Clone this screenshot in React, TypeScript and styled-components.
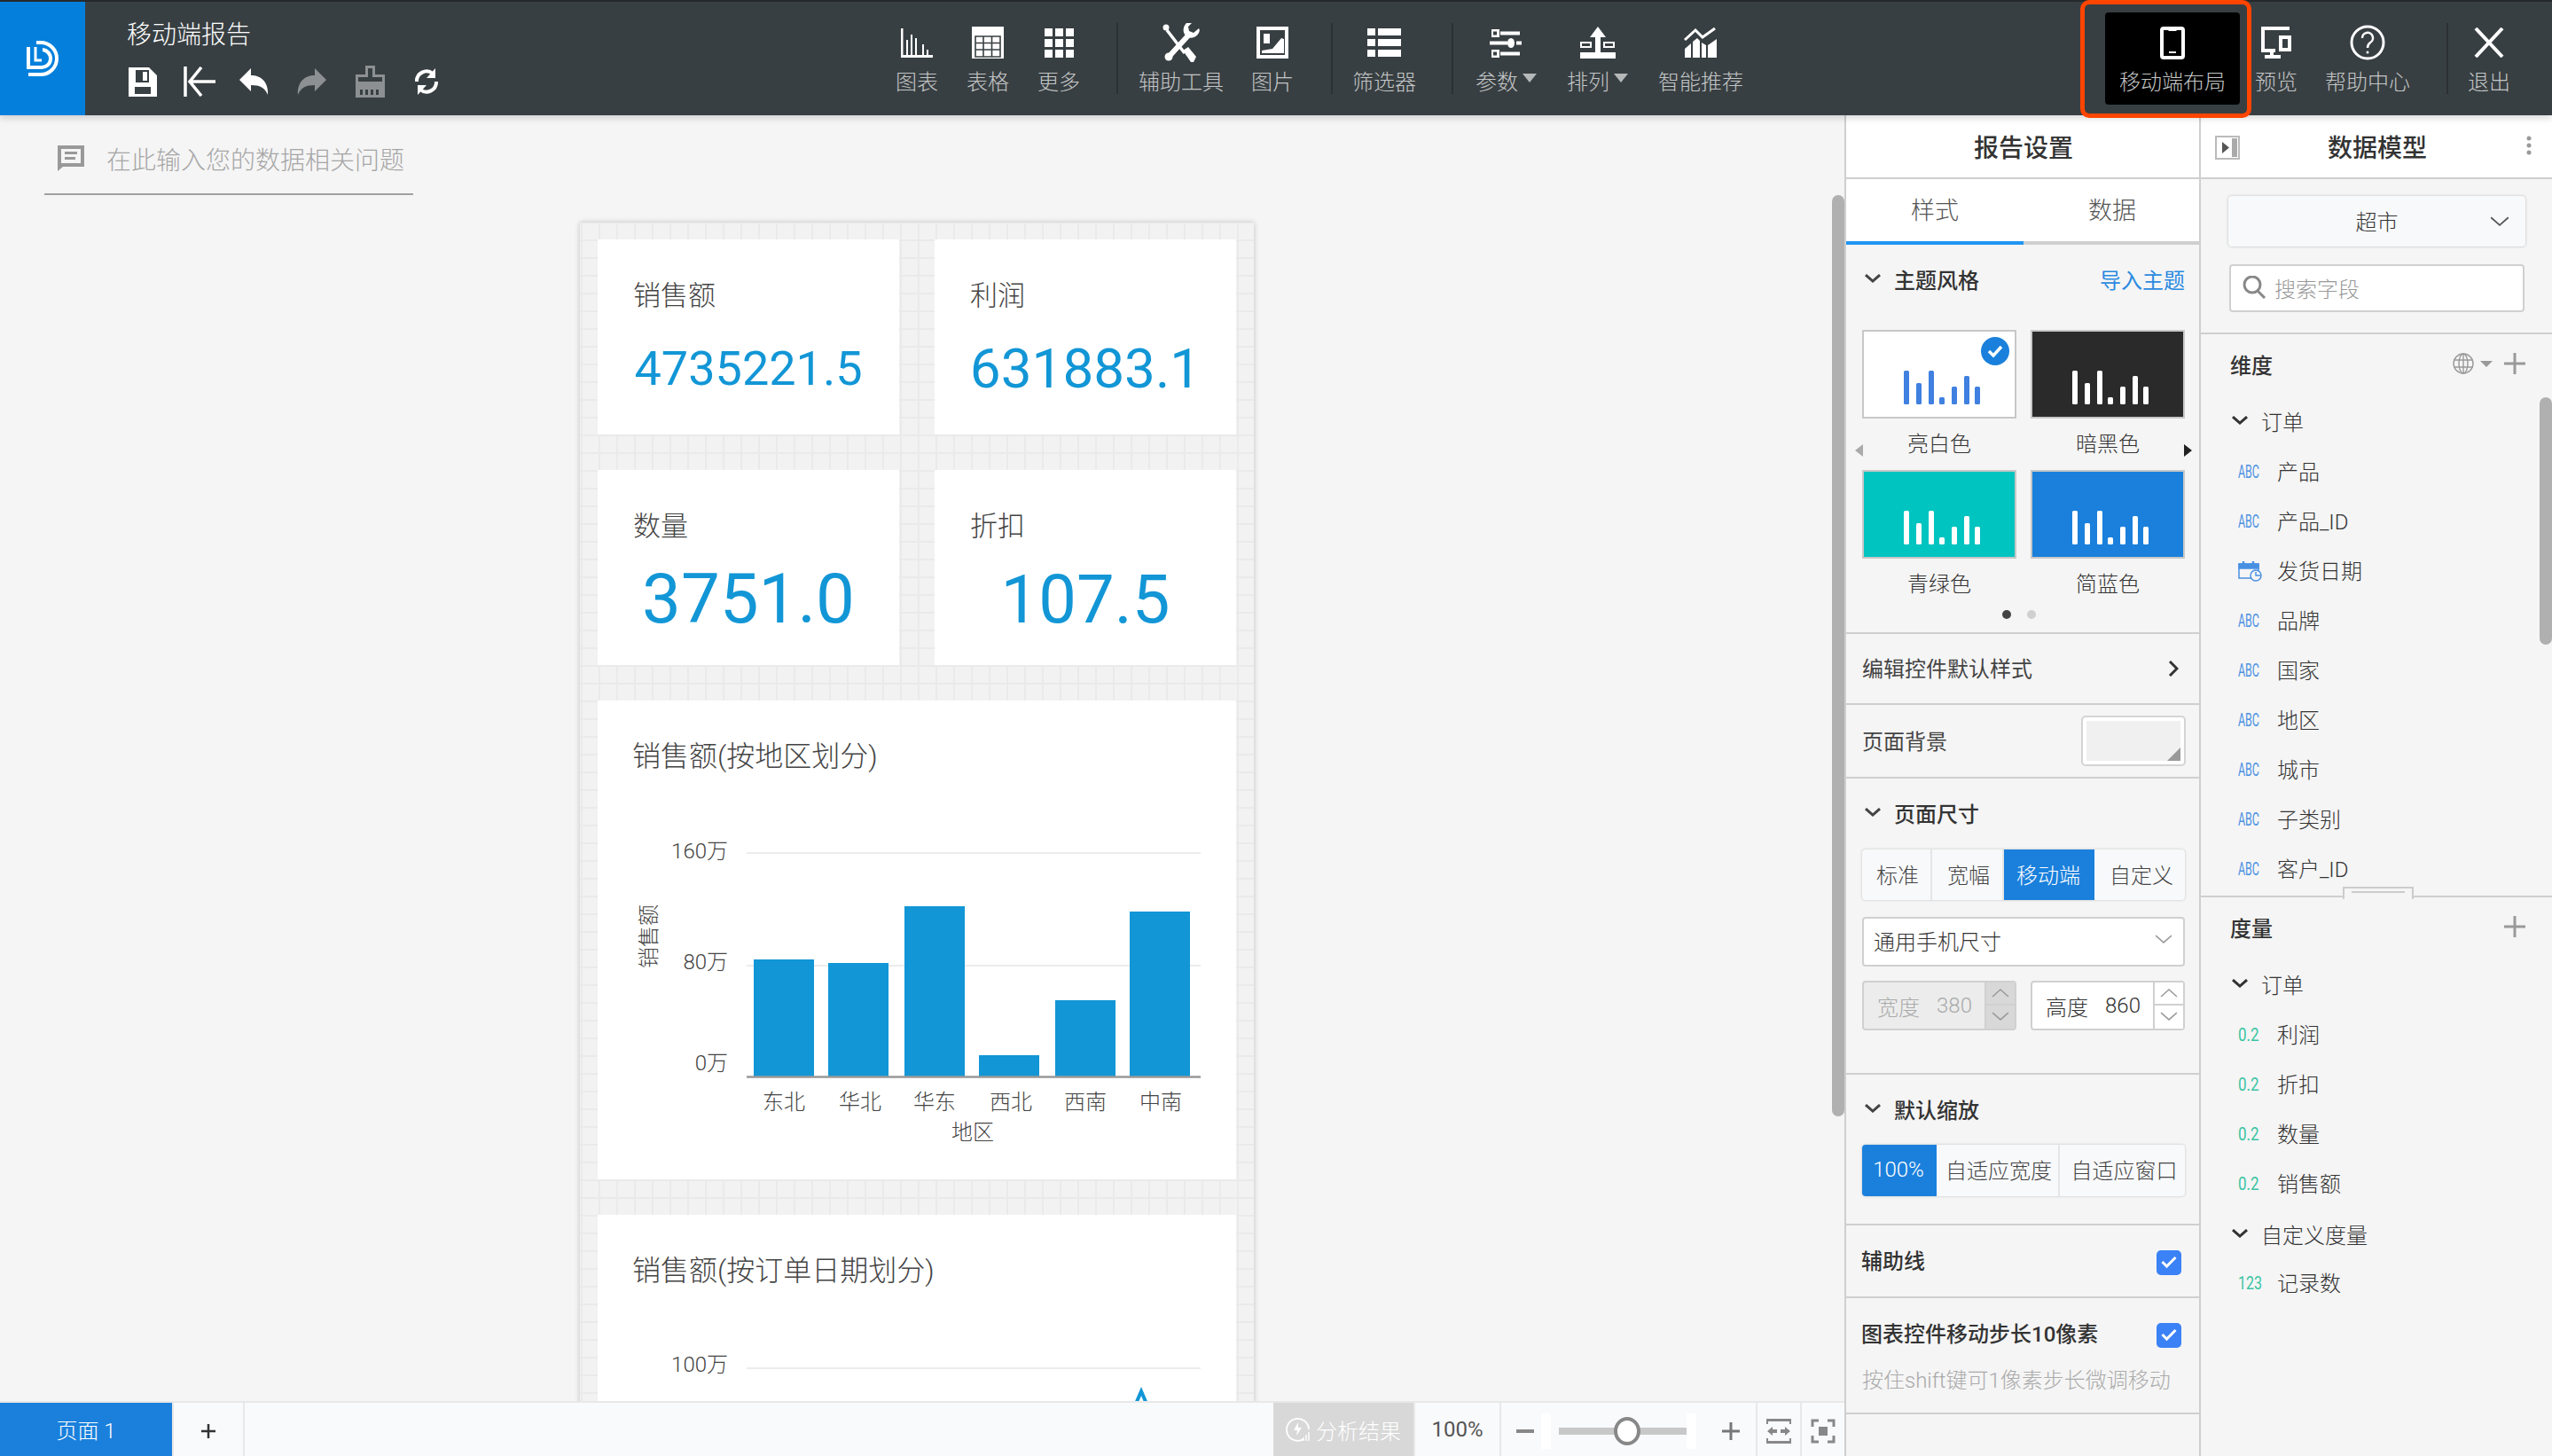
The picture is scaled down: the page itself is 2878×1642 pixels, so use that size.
import React from "react";
import styled, { createGlobalStyle } from "styled-components";

const FONT = `Roboto, "Noto Sans CJK SC", sans-serif`;
const BLUE = "#1a80dc";
const CHART = "#1296d6";
const LINE = "#cfcfcf";

const Global = createGlobalStyle`
  html, body { margin: 0; padding: 0; width: 2878px; height: 1642px; overflow: hidden; background: #f5f5f5; }
  * { box-sizing: border-box; }
  body { font-family: ${FONT}; color: #333; }
  svg { display: block; }
`;

const Shell = styled.div`
  width: 2878px;
  height: 1642px;
  display: flex;
  flex-direction: column;
  overflow: hidden;
`;

/* ---------- top bar ---------- */
const TopBar = styled.header`
  height: 130px;
  flex: none;
  display: flex;
  background: #383f42;
  border-top: 2px solid #25292b;
  box-shadow: 0 3px 8px rgba(0, 0, 0, 0.16);
  position: relative;
  z-index: 3;
`;
const Logo = styled.div`
  width: 96px;
  flex: none;
  background: #0480dc;
  display: flex;
  align-items: center;
  justify-content: center;
`;
const TitleBlock = styled.div`
  width: 898px;
  flex: none;
  padding-left: 47px;
`;
const ReportTitle = styled.div`
  margin-top: 24px;
  font-size: 28px;
  line-height: 28px;
  color: #fff;
  font-weight: 300;
`;
const QuickRow = styled.div`
  display: flex;
  align-items: center;
  height: 36px;
  margin: 20px 0 0 -14px;
`;
const QuickBtn = styled.div<{ $pr?: number }>`
  width: 64px;
  padding-right: ${(p) => p.$pr ?? 0}px;
  display: flex;
  justify-content: center;
`;
const ToolItem = styled.div<{ $w: number; $ml?: number }>`
  width: ${(p) => p.$w}px;
  margin-left: ${(p) => p.$ml ?? 0}px;
  flex: none;
  display: flex;
  flex-direction: column;
  align-items: center;
`;
const IconSlot = styled.div`
  height: 44px;
  margin-top: 24px;
  display: flex;
  align-items: center;
  justify-content: center;
`;
const ToolLabel = styled.div`
  margin-top: 9px;
  font-size: 24px;
  line-height: 28px;
  color: #c4c6c7;
  font-weight: 300;
  display: flex;
  align-items: flex-start;
  white-space: nowrap;
`;
const Caret = styled.span`
  display: inline-block;
  width: 0;
  height: 0;
  margin: 4px 0 0 5px;
  border-left: 8px solid transparent;
  border-right: 8px solid transparent;
  border-top: 10px solid #b5b8b9;
`;
const ToolSep = styled.div<{ $ml: number; $mr: number }>`
  width: 2px;
  height: 80px;
  margin: 24px ${(p) => p.$mr}px 0 ${(p) => p.$ml}px;
  background: #2b3032;
  flex: none;
`;
const RightTools = styled.div`
  margin-left: auto;
  margin-right: 31px;
  display: flex;
`;
const ActiveItem = styled.div`
  width: 152px;
  height: 104px;
  margin-top: 12px;
  background: #000;
  border-radius: 4px;
  display: flex;
  flex-direction: column;
  align-items: center;
  position: relative;
  ${IconSlot} { margin-top: 12px; }
`;
const Highlight = styled.div`
  position: absolute;
  left: -28px;
  right: -13px;
  top: -14px;
  bottom: -15px;
  border: 5px solid #ff4500;
  border-radius: 10px;
  pointer-events: none;
`;

/* ---------- body ---------- */
const Body = styled.div`
  flex: 1;
  display: flex;
  min-height: 0;
`;
const Workspace = styled.main`
  width: 2080px;
  flex: none;
  display: flex;
  flex-direction: column;
  position: relative;
`;
const QuestionBar = styled.div`
  margin-left: 50px;
  width: 416px;
  height: 90px;
  flex: none;
  border-bottom: 2px solid #a0a0a0;
  display: flex;
  align-items: center;
  padding: 9px 0 0 15px;
  gap: 25px;
  font-size: 28px;
  color: #a6a6a6;
  font-weight: 300;
  white-space: nowrap;
`;
const CanvasScroll = styled.div`
  flex: 1;
  min-height: 0;
  overflow: hidden;
  padding: 31px 0 0 654px;
`;
const ScrollThumb = styled.div<{ $top: number; $h: number }>`
  position: absolute;
  right: 0;
  top: ${(p) => p.$top}px;
  width: 14px;
  height: ${(p) => p.$h}px;
  border-radius: 7px;
  background: #b0b0b0;
`;
const PageSheet = styled.div`
  width: 760px;
  padding: 19px 20px 40px;
  display: grid;
  grid-template-columns: 340px 340px;
  gap: 40px;
  background-color: #f2f2f2;
  background-image: linear-gradient(#eaeaea 2px, transparent 2px), linear-gradient(90deg, #eaeaea 2px, transparent 2px);
  background-size: 20px 20px;
  background-position: 1px 19px;
  box-shadow: 0 0 6px rgba(0, 0, 0, 0.22);
`;
const KpiCard = styled.section`
  height: 220px;
  background: #fff;
  padding-top: 44px;
`;
const KpiLabel = styled.div`
  padding-left: 40px;
  font-size: 31px;
  line-height: 40px;
  color: #444;
  font-weight: 300;
`;
const KpiValue = styled.div<{ $size: number }>`
  margin-top: 22px;
  height: 80px;
  line-height: 80px;
  text-align: center;
  font-size: ${(p) => p.$size}px;
  color: ${CHART};
`;
const ChartCard = styled.section<{ $h: number }>`
  grid-column: 1 / 3;
  height: ${(p) => p.$h}px;
  background: #fff;
  padding-top: 41px;
`;
const ChartTitle = styled.div`
  padding: 2px 0 0 39px;
  height: 40px;
  font-size: 32px;
  line-height: 40px;
  color: #444;
  font-weight: 300;
`;
const ChartText = styled.text`
  font-family: ${FONT};
  font-size: 24px;
  fill: #444;
  font-weight: 300;
`;

/* ---------- bottom bar ---------- */
const BottomBar = styled.footer`
  height: 62px;
  flex: none;
  display: flex;
  background: #f9fafc;
  border-top: 2px solid #e8e8e8;
  position: relative;
  z-index: 1;
`;
const PageTab = styled.div`
  width: 194px;
  padding-bottom: 2px;
  background: ${BLUE};
  color: #fff;
  font-size: 24px;
  display: flex;
  align-items: center;
  justify-content: center;
  font-weight: 300;
`;
const BarCell = styled.div<{ $w?: number; $pt?: number }>`
  width: ${(p) => (p.$w ? `${p.$w}px` : "auto")};
  padding-top: ${(p) => p.$pt ?? 0}px;
  flex: none;
  border-left: 2px solid #e8e8e8;
  display: flex;
  align-items: center;
  justify-content: center;
  font-size: 24px;
  color: #555;
`;
const Spacer = styled.div`
  flex: 1;
  border-left: 2px solid #e8e8e8;
`;
const AnalyseBtn = styled.div`
  width: 158px;
  flex: none;
  background: #d8d8d8;
  color: #fff;
  font-size: 24px;
  display: flex;
  align-items: center;
  justify-content: center;
  gap: 6px;
  font-weight: 300;
`;
const SliderWrap = styled.div`
  width: 289px;
  flex: none;
  padding-top: 4px;
  border-left: 2px solid #e8e8e8;
  display: flex;
  align-items: center;
`;
const SliderStop = styled.div`
  width: 11px;
  height: 40px;
  background: #fff;
`;
const SliderTrack = styled.div`
  width: 144px;
  height: 8px;
  background: #c8c8c8;
  margin-left: 9px;
  position: relative;
`;
const SliderThumb = styled.div`
  position: absolute;
  left: 62px;
  top: -12px;
  width: 30px;
  height: 32px;
  border-radius: 50%;
  border: 4px solid #888;
  background: #fff;
`;
const SliderBtn = styled.div<{ $w: number; $pl?: number }>`
  width: ${(p) => p.$w}px;
  padding-left: ${(p) => p.$pl ?? 0}px;
  display: flex;
  justify-content: center;
`;

/* ---------- settings panel ---------- */
const SettingsPanel = styled.aside`
  width: 400px;
  flex: none;
  background: #f5f5f5;
  border-left: 2px solid ${LINE};
  display: flex;
  flex-direction: column;
`;
const PanelHead = styled.div`
  height: 72px;
  flex: none;
  padding-left: 2px;
  background: #fff;
  border-bottom: 2px solid ${LINE};
  display: flex;
  align-items: center;
  justify-content: center;
  font-size: 28px;
  font-weight: 500;
  color: #333;
  position: relative;
`;
const Tabs = styled.div`
  height: 74px;
  flex: none;
  background: #fff;
  border-bottom: 4px solid ${LINE};
  display: flex;
`;
const Tab = styled.div<{ $on?: boolean }>`
  width: 200px;
  flex: none;
  margin-bottom: -4px;
  border-bottom: 4px solid ${(p) => (p.$on ? "#2196f3" : "transparent")};
  display: flex;
  align-items: center;
  justify-content: center;
  font-size: 27px;
  color: #555;
  font-weight: 300;
  padding-bottom: 3px;
  &:last-child { width: 198px; padding-left: 2px; }
`;
const Section = styled.div`
  border-bottom: 2px solid ${LINE};
  position: relative;
`;
const SectionHead = styled.div`
  height: 48px;
  margin-top: 14px;
  padding: 0 16px 0 21px;
  display: flex;
  align-items: center;
  gap: 15px;
  font-size: 24px;
  font-weight: 500;
  color: #333;
`;
const LinkText = styled.span`
  margin-left: auto;
  color: #2a8ae0;
  font-weight: 400;
`;
const ThemeGrid = styled.div`
  margin-top: 34px;
  padding-left: 18px;
  display: grid;
  grid-template-columns: 174px 174px;
  column-gap: 16px;
  row-gap: 2px;
`;
const ThemeCard = styled.div<{ $bg: string }>`
  height: 100px;
  border: 2px solid #c8c8c8;
  background: ${(p) => p.$bg};
  display: flex;
  align-items: flex-end;
  justify-content: center;
  padding: 0 0 14px 6px;
  position: relative;
`;
const ThemeBadge = styled.div`
  position: absolute;
  top: 6px;
  right: 6px;
  width: 32px;
  height: 32px;
`;
const ThemeLabel = styled.div`
  height: 56px;
  padding-bottom: 4px;
  display: flex;
  align-items: center;
  justify-content: center;
  font-size: 24px;
  color: #333;
  font-weight: 300;
`;
const Pager = styled.div`
  height: 10px;
  margin: 2px 0 15px;
  display: flex;
  justify-content: center;
  gap: 18px;
  padding-right: 8px;
`;
const PagerDot = styled.span<{ $on?: boolean }>`
  width: 10px;
  height: 10px;
  border-radius: 50%;
  background: ${(p) => (p.$on ? "#444" : "#d0d0d0")};
`;
const SlideArrow = styled.span<{ $side: "left" | "right" }>`
  position: absolute;
  top: 225px;
  ${(p) => (p.$side === "left" ? "left: 10px;" : "right: 8px;")}
  width: 0;
  height: 0;
  border-top: 7px solid transparent;
  border-bottom: 7px solid transparent;
  ${(p) => (p.$side === "left" ? "border-right: 9px solid #aaa;" : "border-left: 9px solid #222;")}
`;
const PlainRow = styled.div<{ $h: number }>`
  height: ${(p) => p.$h}px;
  padding: 0 20px 3px 18px;
  display: flex;
  align-items: center;
  justify-content: space-between;
  font-size: 24px;
  color: #444;
  font-weight: 400;
`;
const ChevronSlot = styled.span`
  margin: 3px 3px 0 0;
`;
const ColorBox = styled.div`
  width: 116px;
  height: 55px;
  margin: 3px -4px 0 0;
  background: #f0f0f0;
  border: 5px solid #fff;
  outline: 2px solid #d4d4d4;
  outline-offset: -1px;
  border-radius: 4px;
  position: relative;
  &::after {
    content: "";
    position: absolute;
    right: 0;
    bottom: 0;
    border-left: 15px solid transparent;
    border-bottom: 15px solid #999;
  }
`;
const SegGroup = styled.div<{ $mt: number; $h: number; $mb?: number }>`
  margin: ${(p) => p.$mt}px 16px ${(p) => p.$mb ?? 0}px 18px;
  height: ${(p) => p.$h}px;
  display: flex;
  background: #f8f9fb;
  border-radius: 4px;
  box-shadow: 0 0 3px rgba(0, 0, 0, 0.22);
  overflow: hidden;
`;
const Seg = styled.div<{ $w: number; $on?: boolean }>`
  width: ${(p) => p.$w}px;
  flex: none;
  padding: 0 0 3px ${(p) => (p.$on ? 0 : 3)}px;
  display: flex;
  align-items: center;
  justify-content: center;
  font-size: 24px;
  background: ${(p) => (p.$on ? BLUE : "transparent")};
  color: ${(p) => (p.$on ? "#fff" : "#444")};
  border-right: 2px solid ${(p) => (p.$on ? BLUE : "#e6e6e6")};
  white-space: nowrap;
  font-weight: 300;
  &:last-child { border-right: 0; }
`;
const SelectBox = styled.div`
  margin: 19px 16px 0 18px;
  height: 56px;
  background: #fff;
  border: 2px solid #d0d0d0;
  border-radius: 4px;
  padding: 0 12px 4px 11px;
  display: flex;
  align-items: center;
  justify-content: space-between;
  font-size: 24px;
  font-weight: 300;
  color: #333;
`;
const NumRow = styled.div`
  margin: 16px 16px 48px 18px;
  display: grid;
  grid-template-columns: 174px 174px;
  gap: 16px;
`;
const NumInput = styled.div<{ $off?: boolean }>`
  height: 56px;
  background: ${(p) => (p.$off ? "#ececec" : "#fff")};
  border: 2px solid #d0d0d0;
  border-radius: 4px;
  display: flex;
  align-items: center;
  font-size: 24px;
  color: ${(p) => (p.$off ? "#aaa" : "#333")};
  padding-left: 15px;
  font-weight: 300;
  white-space: nowrap;
`;
const NumValue = styled.span`
  margin-left: 19px;
`;
const Spin = styled.div<{ $off?: boolean }>`
  margin-left: auto;
  flex: none;
  align-self: stretch;
  width: 34px;
  border-left: 2px solid #d0d0d0;
  background: ${(p) => (p.$off ? "#d8d8d8" : "#fff")};
  display: grid;
  grid-template-rows: 1fr 1fr;
`;
const SpinCell = styled.div`
  display: flex;
  align-items: center;
  justify-content: center;
  &:first-child { border-bottom: 2px solid #d0d0d0; }
`;
const CheckRow = styled.div<{ $h?: number; $mt?: number }>`
  height: ${(p) => p.$h ?? 40}px;
  margin-top: ${(p) => p.$mt ?? 20}px;
  padding: 0 20px 3px 17px;
  display: flex;
  align-items: center;
  justify-content: space-between;
  font-size: 24px;
  font-weight: 500;
  color: #333;
`;
const HintText = styled.div`
  margin: 13px 0 16px;
  padding-left: 18px;
  height: 40px;
  line-height: 40px;
  font-size: 24px;
  color: #aaa;
  font-weight: 300;
  white-space: nowrap;
`;
const CheckBox = styled.div`
  width: 28px;
  height: 28px;
  margin-top: 6px;
  border-radius: 5px;
  background: #3b82f6;
  display: flex;
  align-items: center;
  justify-content: center;
`;

/* ---------- data panel ---------- */
const DataPanel = styled.aside`
  width: 398px;
  flex: none;
  background: #f5f5f5;
  border-left: 2px solid ${LINE};
  display: flex;
  flex-direction: column;
  position: relative;
`;
const HeadLeft = styled.div`
  position: absolute;
  left: 16px;
  top: 23px;
`;
const HeadRight = styled.div`
  position: absolute;
  right: 23px;
  top: 23px;
`;
const DataSource = styled.div`
  margin: 19px 30px 0 31px;
  height: 57px;
  padding-bottom: 3px;
  background: #f8f9fb;
  border-radius: 4px;
  box-shadow: 0 0 3px rgba(0, 0, 0, 0.25);
  display: flex;
  align-items: center;
  justify-content: center;
  font-size: 24px;
  font-weight: 300;
  position: relative;
`;
const SourceChevron = styled.div`
  position: absolute;
  right: 18px;
  top: 23px;
`;
const SearchBox = styled.div`
  margin: 20px 31px 23px 32px;
  height: 54px;
  background: #fff;
  border: 2px solid #d0d0d0;
  border-radius: 4px;
  display: flex;
  align-items: center;
  padding: 0 0 2px 13px;
  gap: 8px;
  font-size: 24px;
  color: #999;
  font-weight: 300;
`;
const FieldBlock = styled.div<{ $h?: number }>`
  ${(p) => (p.$h ? `height: ${p.$h}px;` : "")}
  border-top: 2px solid ${LINE};
  flex: none;
  overflow: hidden;
  position: relative;
`;
const FieldHead = styled.div`
  height: 48px;
  margin-top: 10px;
  padding: 0 30px 2px 33px;
  display: flex;
  align-items: center;
  font-size: 24px;
  font-weight: 500;
  color: #333;
`;
const HeadTools = styled.div`
  margin-left: auto;
  display: flex;
  align-items: center;
  gap: 7px;
`;
const GroupRow = styled.div<{ $mb?: number }>`
  height: 58px;
  margin: 10px 0 ${(p) => p.$mb ?? 0}px;
  padding-left: 35px;
  display: flex;
  align-items: center;
  gap: 15px;
  font-size: 24px;
  color: #333;
  font-weight: 300;
`;
const SubGroupRow = styled(GroupRow)`
  height: 56px;
  margin: 0;
`;
const FieldRow = styled.div`
  height: 56px;
  padding: 0 0 3px 42px;
  display: flex;
  align-items: center;
  font-size: 24px;
  color: #333;
  font-weight: 300;
  white-space: nowrap;
`;
const TypeSlot = styled.div`
  width: 44px;
  flex: none;
  margin-top: 3px;
`;
const TypeTag = styled.div<{ $c: string; $sx: number }>`
  font-family: Roboto, sans-serif;
  font-size: 20px;
  line-height: 20px;
  font-weight: 400;
  color: ${(p) => p.$c};
  transform: scaleX(${(p) => p.$sx});
  transform-origin: left center;
`;
const ResizeHandle = styled.div`
  position: absolute;
  left: 160px;
  top: 870px;
  width: 80px;
  height: 14px;
  border: 2px solid #ccc;
  border-bottom: 0;
  background: #f5f5f5;
  z-index: 2;
  display: flex;
  justify-content: center;
  padding-top: 3px;
  &::after {
    content: "";
    width: 60px;
    height: 2px;
    background: #ccc;
  }
`;
const MiniCaret = styled.span`
  width: 0;
  height: 0;
  margin-right: 6px;
  border-left: 7px solid transparent;
  border-right: 7px solid transparent;
  border-top: 7px solid #999;
`;

/* ---------- icons ---------- */
type IP = { c?: string };
const W = "#ffffff";
const LogoIcon = () => (
  <svg width="44" height="42" viewBox="0 0 44 42" fill="none" stroke="#fff" strokeWidth="4">
    <path d="M15 3h5a18 18 0 0 1 0 36H6" />
    <path d="M6 8v23h14a10 10 0 0 0 2-20" />
    <path d="M14 8v15h7" strokeWidth="3" />
  </svg>
);
const SaveIcon = () => (
  <svg width="32" height="33" viewBox="0 0 32 33">
    <path fillRule="evenodd" fill={W} d="M0 0h23l9 9v24H0zM8 3v14h15V3zM7 22v8h18v-8z" />
    <path fill={W} d="M16 5h5v10h-5z" />
  </svg>
);
const BackIcon = () => (
  <svg width="36" height="34" viewBox="0 0 36 34" fill="none" stroke={W} strokeWidth="3.5">
    <path d="M2 0v34M36 17H6M20 1 7 17l13 16" />
  </svg>
);
const UndoIcon = ({ c = W, flip }: IP & { flip?: boolean }) => (
  <svg width="33" height="30" viewBox="0 0 33 30" style={flip ? { transform: "scaleX(-1)" } : undefined}>
    <path fill={c} d="M0 13 13 0v8c12 0 20 8 19 22-3-8-9-11-19-11v7z" />
  </svg>
);
const BrushIcon = () => (
  <svg width="33" height="36" viewBox="0 0 33 36">
    <path fill="#8d9092" fillRule="evenodd" d="M11 0h11v10h11v26H0V10h11zM14 3v10H3v5h27v-5H19V3zM5 27v6h3v-6zM11 27v6h3v-6zM17 27v6h3v-6zM23 27v6h3v-6z" />
  </svg>
);
const RefreshIcon = () => (
  <svg width="28" height="30" viewBox="0 0 28 30" fill="none" stroke={W} strokeWidth="4">
    <path d="M3 15A11 11 0 0 1 21 6" />
    <path d="M25 15A11 11 0 0 1 7 24" />
    <path d="M24 0v11H14z" fill={W} stroke="none" />
    <path d="M4 30V19h10z" fill={W} stroke="none" />
  </svg>
);
const CommentIcon = () => (
  <svg width="30" height="29" viewBox="0 0 30 29">
    <path fill="#999" fillRule="evenodd" d="M0 0h30v24H6l-6 5zM4 4v16h22V4zM8 7h14v3H8zM8 13h12v3H8z" />
  </svg>
);
const BarsIcon = () => (
  <svg width="36" height="33" viewBox="0 0 36 33" fill={W}>
    <path d="M0 0h2.5v30H36v3H0zM6 13h2v17H6zM11 7h2v23h-2zM16 11h2v19h-2zM24 18h2v12h-2zM29 24h2v6h-2z" />
  </svg>
);
const TableIcon = () => (
  <svg width="36" height="36" viewBox="0 0 36 36">
    <rect width="36" height="36" fill={W} />
    <path stroke="#383f42" strokeWidth="1.6" fill="none" d="M4 11h28v23H4zM4 18.500h28M4 26h28M13 11v23M22.500 11v23" />
  </svg>
);
const GridIcon = () => (
  <svg width="33" height="33" viewBox="0 0 33 33" fill={W}>
    {[0, 12, 24].map((y) => [0, 12, 24].map((x) => <rect key={`${x}-${y}`} x={x} y={y} width="9" height="9" />))}
  </svg>
);
const ToolsIcon = () => (
  <svg width="44" height="44" viewBox="0 0 44 44">
    <path stroke={W} strokeWidth="3.500" d="M6 8 26 34" />
    <circle cx="5" cy="5" r="3.500" fill={W} />
    <path fill={W} d="M24 31l6-4 9 11-3 6h-3z" />
    <path stroke={W} strokeWidth="6" d="M31 13 9 37" />
    <circle cx="8" cy="38" r="4.500" fill={W} />
    <path fill={W} d="M28 0c-5 5-4 12 0 15 4 3 11 2 14-4 1-2 1-4 0-5l-6 5-5-2-1-5 4-4z" />
  </svg>
);
const ImageIcon = () => (
  <svg width="36" height="36" viewBox="0 0 36 36">
    <path fill={W} fillRule="evenodd" d="M0 0h36v36H0zM4 4v28h28V4z" />
    <path fill={W} d="M8 8h7v11H8zM6 30V27l12-2 10-12 3 1v16z" />
  </svg>
);
const ListIcon = () => (
  <svg width="38" height="32" viewBox="0 0 38 32" fill={W}>
    {[0, 12, 24].map((y) => (
      <g key={y}>
        <rect y={y} width="9" height="8" />
        <rect x="12" y={y} width="26" height="8" />
      </g>
    ))}
  </svg>
);
const SlidersIcon = () => (
  <svg width="37" height="33" viewBox="0 0 37 33" fill={W}>
    <path fillRule="evenodd" d="M2 1h9v9H2zM4 3.500v4h4v-4z" />
    <rect x="12" y="3.500" width="22" height="4" />
    <rect x="0" y="14.500" width="20" height="4" />
    <ellipse cx="24" cy="16.500" rx="4" ry="5.500" />
    <rect x="30" y="14.500" width="6" height="4" />
    <path fillRule="evenodd" d="M2 24h9v9H2zM4 26.500v4h4v-4z" />
    <rect x="12" y="26.500" width="22" height="4" />
  </svg>
);
const SortIcon = () => (
  <svg width="40" height="36" viewBox="0 0 40 36" fill={W}>
    <path d="M20 0 29 12h-6v20h-6V12h-6z" />
    <path d="M0 29h40v7H0z" />
    <path fillRule="evenodd" d="M0 17h13v7H0zM2 19v3h9v-3zM26 17h13v7H26zM28 19v3h9v-3z" />
  </svg>
);
const TrendIcon = () => (
  <svg width="38" height="34" viewBox="0 0 38 34">
    <path d="M1 14 13 3l8 8 14-10" stroke={W} strokeWidth="3" fill="none" />
    <path fill={W} d="M1 34V24l7-6v16zM10 34V16l5-4 3 3v19zM20 34V17l5 3v14zM27 34V20l10-7v21z" />
  </svg>
);
const PhoneIcon = () => (
  <svg width="28" height="37" viewBox="0 0 28 37">
    <path fill={W} fillRule="evenodd" d="M4 0h20a4 4 0 0 1 4 4v29a4 4 0 0 1-4 4H4a4 4 0 0 1-4-4V4a4 4 0 0 1 4-4zM4 4v29h20V4h-5l-1 1H10L9 4z" />
    <rect x="10" y="28" width="8" height="2" fill={W} />
  </svg>
);
const PreviewIcon = () => (
  <svg width="34" height="36" viewBox="0 0 34 36" fill={W}>
    <path d="M0 0h32v4H4v21h12v4h-2v3h8v4H4v-4h6v-3H0z" />
    <path fillRule="evenodd" d="M20 10h14v18H20zM24 14v10h6V14z" />
  </svg>
);
const HelpIcon = () => (
  <svg width="40" height="40" viewBox="0 0 40 40" fill="none" stroke={W}>
    <circle cx="20" cy="20" r="18" strokeWidth="3" />
    <path d="M14 15a6 6 0 1 1 9 5c-2 1.500-3 2.500-3 6" strokeWidth="2.500" />
    <circle cx="20" cy="31" r="1.500" fill={W} stroke="none" />
  </svg>
);
const CloseIcon = () => (
  <svg width="34" height="34" viewBox="0 0 34 34" stroke={W} strokeWidth="4">
    <path d="M2 1 32 33M32 1 2 33" />
  </svg>
);
const Chevron = ({ c = "#444", w = 18, sw = 3 }: IP & { w?: number; sw?: number }) => (
  <svg width={w} height={w * 0.56} viewBox="0 0 18 10" fill="none" stroke={c} strokeWidth={(sw * 18) / w}>
    <path d="M1 1l8 7 8-7" />
  </svg>
);
const ChevronUp = ({ c = "#888" }: IP) => (
  <svg width="20" height="10" viewBox="0 0 20 10" fill="none" stroke={c} strokeWidth="1.500">
    <path d="M1 9l9-8 9 8" />
  </svg>
);
const ChevronRight = () => (
  <svg width="12" height="18" viewBox="0 0 12 18" fill="none" stroke="#333" strokeWidth="3">
    <path d="M2 1l8 8-8 8" />
  </svg>
);
const TinyBars = ({ c }: { c: string }) => (
  <svg width="86" height="38" viewBox="0 0 86 38" fill={c}>
    {[[0, 38], [14, 24], [28, 38], [40, 8], [54, 20], [68, 32], [80, 20]].map(([x, h]) => (
      <rect key={x} x={x} y={38 - h} width="6" height={h} rx="1.500" />
    ))}
  </svg>
);
const Tick = ({ w = 18 }: { w?: number }) => (
  <svg width={w} height={w * 0.78} viewBox="0 0 18 14" fill="none" stroke="#fff" strokeWidth="3">
    <path d="M1.500 7l5 5 10-10" />
  </svg>
);
const PanelToggle = () => (
  <svg width="28" height="27" viewBox="0 0 28 27">
    <rect x="1" y="1" width="26" height="25" fill="#fff" stroke="#bbb" strokeWidth="2" />
    <path d="M8 7l8 6.500-8 6.500z" fill="#555" />
    <rect x="19" y="3" width="6" height="21" fill="#aaa" />
  </svg>
);
const DotsIcon = () => (
  <svg width="6" height="24" viewBox="0 0 6 24" fill="#9a9a9a">
    <circle cx="3" cy="3" r="2.500" />
    <circle cx="3" cy="11" r="2.500" />
    <circle cx="3" cy="19" r="2.500" />
  </svg>
);
const SearchIcon = () => (
  <svg width="28" height="26" viewBox="0 0 28 26" fill="none" stroke="#888" strokeWidth="3">
    <circle cx="11" cy="10" r="9" />
    <path d="M17 17l8 8" />
  </svg>
);
const GlobeIcon = () => (
  <svg width="24" height="24" viewBox="0 0 24 24" fill="none" stroke="#999" strokeWidth="1.400">
    <circle cx="12" cy="12" r="11" />
    <ellipse cx="12" cy="12" rx="5" ry="11" />
    <path d="M1 8h22M1 16h22M12 1v22" />
  </svg>
);
const PlusIcon = ({ c = "#999", s = 24, sw = 3 }: IP & { s?: number; sw?: number }) => (
  <svg width={s} height={s} viewBox={`0 0 ${s} ${s}`} stroke={c} strokeWidth={sw}>
    <path d={`M0 ${s / 2}H${s}M${s / 2} 0V${s}`} />
  </svg>
);
const MinusIcon = () => (
  <svg width="20" height="4" viewBox="0 0 20 4" fill="#888">
    <rect width="20" height="4" />
  </svg>
);
const CalendarIcon = () => (
  <svg width="27" height="24" viewBox="0 0 27 24" fill="none" stroke="#4a90e2" strokeWidth="1.500">
    <path d="M17 20H1V4h22v10" />
    <path d="M1 4h22v5H1z" fill="#4a90e2" />
    <path d="M6 1v5M17 1v5" strokeWidth="2.500" />
    <circle cx="20" cy="17" r="6" fill="#f5f5f5" />
    <path d="M20 13v4h5" />
  </svg>
);
const BoltIcon = () => (
  <svg width="28" height="28" viewBox="0 0 28 28" fill="none" stroke="#fff" strokeWidth="1.800">
    <path d="M20 25A12.500 12.500 0 1 1 26 14" />
    <path d="M14 6l-5 9h4l-1 6 6-9h-4z" fill="#fff" stroke="none" />
    <path d="M20 27v-4M23 27v-7M26 27v-10" strokeWidth="1.400" />
  </svg>
);
const FitWidthIcon = () => (
  <svg width="28" height="28" viewBox="0 0 28 28" fill="#888">
    <path d="M0 0h28v6h-2V3H2v3H0zM0 22h2v3h24v-3h2v6H0z" />
    <path d="M1 14l6-5v3h5v4H7v3zM27 14l-6-5v3h-5v4h5v3z" />
  </svg>
);
const FitScreenIcon = () => (
  <svg width="28" height="28" viewBox="0 0 28 28" fill="none" stroke="#888" strokeWidth="3">
    <path d="M9 2H2v7M19 2h7v7M9 26H2v-7M19 26h7v-7" />
    <rect x="9" y="9" width="10" height="10" fill="#888" stroke="none" />
  </svg>
);

/* ---------- charts ---------- */
const regionBars = [
  { n: "东北", x: 176, top: 211, lx: 210 },
  { n: "华北", x: 260, top: 215, lx: 296 },
  { n: "华东", x: 346, top: 151, lx: 380 },
  { n: "西北", x: 430, top: 319, lx: 466 },
  { n: "西南", x: 516, top: 257, lx: 550 },
  { n: "中南", x: 600, top: 157, lx: 635 },
];
const RegionChart = () => (
  <svg width="720" height="418" viewBox="0 0 720 418">
    <path d="M168 91H680M168 218H680" stroke="#ececec" strokeWidth="2" />
    {regionBars.map((b) => (
      <rect key={b.n} x={b.x} y={b.top} width="68" height={343 - b.top} fill={CHART} />
    ))}
    <path d="M168 343.500H680" stroke="#999" strokeWidth="2.500" />
    <ChartText x="147" y="97" textAnchor="end">160万</ChartText>
    <ChartText x="147" y="222" textAnchor="end">80万</ChartText>
    <ChartText x="147" y="336" textAnchor="end">0万</ChartText>
    <ChartText transform="translate(66 185) rotate(-90)" textAnchor="middle">销售额</ChartText>
    {regionBars.map((b) => (
      <ChartText key={b.n} x={b.lx} y="380" textAnchor="middle">{b.n}</ChartText>
    ))}
    <ChartText x="423" y="414" textAnchor="middle">地区</ChartText>
  </svg>
);
const DateChart = () => (
  <svg width="720" height="140" viewBox="0 0 720 140">
    <path d="M168 92H680" stroke="#ececec" strokeWidth="2" />
    <ChartText x="147" y="96" textAnchor="end">100万</ChartText>
    <path d="M607 132 613 118 619 132" fill="none" stroke={CHART} strokeWidth="4" />
  </svg>
);

const dimensions: [string, boolean][] = [
  ["产品", false], ["产品_ID", false], ["发货日期", true], ["品牌", false], ["国家", false],
  ["地区", false], ["城市", false], ["子类别", false], ["客户_ID", false],
];

const Field = ({ label, kind }: { label: string; kind: "abc" | "date" | "num" | "int" }) => (
  <FieldRow>
    <TypeSlot>
      {kind === "abc" && <TypeTag $c="#4a90e2" $sx={0.62}>ABC</TypeTag>}
      {kind === "date" && <CalendarIcon />}
      {kind === "num" && <TypeTag $c="#3bc4a3" $sx={0.85}>0.2</TypeTag>}
      {kind === "int" && <TypeTag $c="#3bc4a3" $sx={0.8}>123</TypeTag>}
    </TypeSlot>
    {label}
  </FieldRow>
);

export default function App() {
  return (
    <Shell>
      <Global />
      <TopBar>
        <Logo><LogoIcon /></Logo>
        <TitleBlock>
          <ReportTitle>移动端报告</ReportTitle>
          <QuickRow>
            <QuickBtn><SaveIcon /></QuickBtn>
            <QuickBtn><BackIcon /></QuickBtn>
            <QuickBtn $pr={5}><UndoIcon /></QuickBtn>
            <QuickBtn $pr={3}><UndoIcon c="#8d9092" flip /></QuickBtn>
            <QuickBtn><BrushIcon /></QuickBtn>
            <QuickBtn><RefreshIcon /></QuickBtn>
          </QuickRow>
        </TitleBlock>
        <ToolItem $w={80}><IconSlot><BarsIcon /></IconSlot><ToolLabel>图表</ToolLabel></ToolItem>
        <ToolItem $w={80}><IconSlot><TableIcon /></IconSlot><ToolLabel>表格</ToolLabel></ToolItem>
        <ToolItem $w={80}><IconSlot><GridIcon /></IconSlot><ToolLabel>更多</ToolLabel></ToolItem>
        <ToolSep $ml={25} $mr={11} />
        <ToolItem $w={120}><IconSlot><ToolsIcon /></IconSlot><ToolLabel>辅助工具</ToolLabel></ToolItem>
        <ToolItem $w={86}><IconSlot><ImageIcon /></IconSlot><ToolLabel>图片</ToolLabel></ToolItem>
        <ToolSep $ml={23} $mr={8} />
        <ToolItem $w={100}><IconSlot><ListIcon /></IconSlot><ToolLabel>筛选器</ToolLabel></ToolItem>
        <ToolSep $ml={26} $mr={8} />
        <ToolItem $w={103}><IconSlot><SlidersIcon /></IconSlot><ToolLabel>参数<Caret /></ToolLabel></ToolItem>
        <ToolItem $w={103}><IconSlot><SortIcon /></IconSlot><ToolLabel>排列<Caret /></ToolLabel></ToolItem>
        <ToolItem $w={120} $ml={5}><IconSlot><TrendIcon /></IconSlot><ToolLabel>智能推荐</ToolLabel></ToolItem>
        <RightTools>
          <ActiveItem>
            <IconSlot><PhoneIcon /></IconSlot>
            <ToolLabel>移动端布局</ToolLabel>
            <Highlight />
          </ActiveItem>
          <ToolItem $w={80} $ml={1}><IconSlot><PreviewIcon /></IconSlot><ToolLabel>预览</ToolLabel></ToolItem>
          <ToolItem $w={120} $ml={3}><IconSlot><HelpIcon /></IconSlot><ToolLabel>帮助中心</ToolLabel></ToolItem>
          <ToolSep $ml={29} $mr={6} />
          <ToolItem $w={80}><IconSlot><CloseIcon /></IconSlot><ToolLabel>退出</ToolLabel></ToolItem>
        </RightTools>
      </TopBar>

      <Body>
        <Workspace>
          <QuestionBar><CommentIcon />在此输入您的数据相关问题</QuestionBar>
          <CanvasScroll>
            <PageSheet>
              <KpiCard><KpiLabel>销售额</KpiLabel><KpiValue $size={54}>4735221.5</KpiValue></KpiCard>
              <KpiCard><KpiLabel>利润</KpiLabel><KpiValue $size={62}>631883.1</KpiValue></KpiCard>
              <KpiCard><KpiLabel>数量</KpiLabel><KpiValue $size={78}>3751.0</KpiValue></KpiCard>
              <KpiCard><KpiLabel>折扣</KpiLabel><KpiValue $size={76}>107.5</KpiValue></KpiCard>
              <ChartCard $h={540}>
                <ChartTitle>销售额(按地区划分)</ChartTitle>
                <RegionChart />
              </ChartCard>
              <ChartCard $h={540}>
                <ChartTitle>销售额(按订单日期划分)</ChartTitle>
                <DateChart />
              </ChartCard>
            </PageSheet>
          </CanvasScroll>
          <BottomBar>
            <PageTab>页面 1</PageTab>
            <BarCell $w={80} $pt={4}><PlusIcon c="#333" s={16} sw={2.500} /></BarCell>
            <Spacer />
            <AnalyseBtn><BoltIcon />分析结果</AnalyseBtn>
            <BarCell $w={97}>100%</BarCell>
            <SliderWrap>
              <SliderBtn $w={45} $pl={9}><MinusIcon /></SliderBtn>
              <SliderStop />
              <SliderTrack><SliderThumb /></SliderTrack>
              <SliderStop />
              <SliderBtn $w={65} $pl={12}><PlusIcon c="#777" s={20} sw={3} /></SliderBtn>
            </SliderWrap>
            <BarCell $w={50} $pt={3}><FitWidthIcon /></BarCell>
            <BarCell $w={50} $pt={3}><FitScreenIcon /></BarCell>
          </BottomBar>
          <ScrollThumb $top={90} $h={1039} />
        </Workspace>

        <SettingsPanel>
          <PanelHead>报告设置</PanelHead>
          <Tabs>
            <Tab $on>样式</Tab>
            <Tab>数据</Tab>
          </Tabs>
          <Section>
            <SectionHead>
              <Chevron />主题风格<LinkText>导入主题</LinkText>
            </SectionHead>
            <ThemeGrid>
              <div>
                <ThemeCard $bg="#fff">
                  <TinyBars c="#3f80e0" />
                  <ThemeBadge>
                    <svg width="32" height="32" viewBox="0 0 32 32">
                      <circle cx="16" cy="16" r="16" fill={BLUE} />
                      <path d="M9 16l5 5 9-10" fill="none" stroke="#fff" strokeWidth="3.500" />
                    </svg>
                  </ThemeBadge>
                </ThemeCard>
                <ThemeLabel>亮白色</ThemeLabel>
              </div>
              <div>
                <ThemeCard $bg="#2a2a2a"><TinyBars c="#fff" /></ThemeCard>
                <ThemeLabel>暗黑色</ThemeLabel>
              </div>
              <div>
                <ThemeCard $bg="#00c4c0"><TinyBars c="#fff" /></ThemeCard>
                <ThemeLabel>青绿色</ThemeLabel>
              </div>
              <div>
                <ThemeCard $bg={BLUE}><TinyBars c="#fff" /></ThemeCard>
                <ThemeLabel>简蓝色</ThemeLabel>
              </div>
            </ThemeGrid>
            <Pager><PagerDot $on /><PagerDot /></Pager>
            <SlideArrow $side="left" />
            <SlideArrow $side="right" />
          </Section>
          <Section><PlainRow $h={78}>编辑控件默认样式<ChevronSlot><ChevronRight /></ChevronSlot></PlainRow></Section>
          <Section><PlainRow $h={81}>页面背景<ColorBox /></PlainRow></Section>
          <Section>
            <SectionHead><Chevron />页面尺寸</SectionHead>
            <SegGroup $mt={18} $h={57}>
              <Seg $w={79}>标准</Seg>
              <Seg $w={81}>宽幅</Seg>
              <Seg $w={102} $on>移动端</Seg>
              <Seg $w={103}>自定义</Seg>
            </SegGroup>
            <SelectBox>通用手机尺寸<Chevron c="#999" w={20} sw={1.500} /></SelectBox>
            <NumRow>
              <NumInput $off>
                宽度<NumValue>380</NumValue>
                <Spin $off>
                  <SpinCell><ChevronUp c="#999" /></SpinCell>
                  <SpinCell><Chevron c="#999" w={20} sw={1.500} /></SpinCell>
                </Spin>
              </NumInput>
              <NumInput>
                高度<NumValue>860</NumValue>
                <Spin>
                  <SpinCell><ChevronUp c="#999" /></SpinCell>
                  <SpinCell><Chevron c="#999" w={20} sw={1.500} /></SpinCell>
                </Spin>
              </NumInput>
            </NumRow>
          </Section>
          <Section>
            <SectionHead><Chevron />默认缩放</SectionHead>
            <SegGroup $mt={17} $h={58} $mb={31}>
              <Seg $w={84} $on>100%</Seg>
              <Seg $w={139}>自适应宽度</Seg>
              <Seg $w={142}>自适应窗口</Seg>
            </SegGroup>
          </Section>
          <Section>
            <CheckRow $h={80} $mt={0}>辅助线<CheckBox><Tick /></CheckBox></CheckRow>
          </Section>
          <Section>
            <CheckRow>图表控件移动步长10像素<CheckBox><Tick /></CheckBox></CheckRow>
            <HintText>按住shift键可1像素步长微调移动</HintText>
          </Section>
        </SettingsPanel>

        <DataPanel>
          <PanelHead>
            <HeadLeft><PanelToggle /></HeadLeft>
            数据模型
            <HeadRight><DotsIcon /></HeadRight>
          </PanelHead>
          <DataSource>
            超市
            <SourceChevron><Chevron c="#555" w={22} sw={1.800} /></SourceChevron>
          </DataSource>
          <SearchBox><SearchIcon />搜索字段</SearchBox>
          <FieldBlock $h={635}>
            <FieldHead>
              维度
              <HeadTools>
                <GlobeIcon /><MiniCaret /><PlusIcon />
              </HeadTools>
            </FieldHead>
            <GroupRow $mb={1}><Chevron c="#333" />订单</GroupRow>
            {dimensions.map(([n, d]) => <Field key={n} label={n} kind={d ? "date" : "abc"} />)}
          </FieldBlock>
          <FieldBlock>
            <FieldHead>度量<HeadTools><PlusIcon /></HeadTools></FieldHead>
            <GroupRow $mb={1}><Chevron c="#333" />订单</GroupRow>
            {["利润", "折扣", "数量", "销售额"].map((n) => <Field key={n} label={n} kind="num" />)}
            <SubGroupRow><Chevron c="#333" />自定义度量</SubGroupRow>
            <Field label="记录数" kind="int" />
          </FieldBlock>
          <ResizeHandle />
          <ScrollThumb $top={318} $h={279} />
        </DataPanel>
      </Body>
    </Shell>
  );
}
